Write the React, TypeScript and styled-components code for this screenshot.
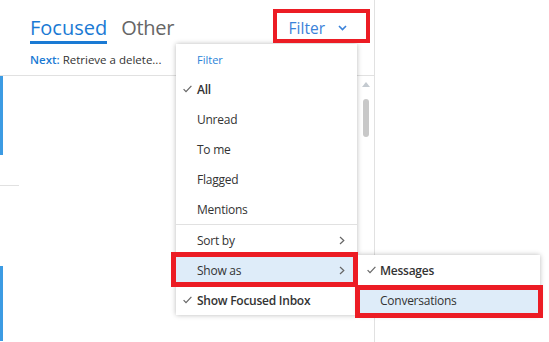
import React from 'react'
import styled, { createGlobalStyle } from 'styled-components'

//Global
const GlobalStyle = createGlobalStyle`
  html, body {
    margin: 0;
    padding: 0;
    background: #ffffff;
  }
  body {
    font-family: 'Open Sans', 'Noto Sans', sans-serif;
    color: #333333;
  }
`

//Styled Components
const Page = styled.div`
  position: relative;
  width: 549px;
  height: 342px;
  overflow: hidden;
  display: flex;
`

const MailPane = styled.div`
  width: 374px;
  height: 342px;
  border-right: 1px solid #e1e1e1;
  display: flex;
  flex-direction: column;
`

const Header = styled.div`
  height: 76px;
  box-sizing: border-box;
  padding-left: 30px;
  border-bottom: 1px solid #e1e1e1;
`

const TabsRow = styled.div`
  height: 44px;
  display: flex;
  align-items: flex-end;
`

const Tab = styled.div<{ $active?: boolean }>`
  font-size: 20px;
  line-height: 24px;
  padding-bottom: 1px;
  margin-right: 14px;
  letter-spacing: ${(p) => (p.$active ? '0' : '-0.3px')};
  color: ${(p) => (p.$active ? '#1a7ad4' : '#666666')};
  border-bottom: 3px solid ${(p) => (p.$active ? '#1a7ad4' : 'transparent')};
`

const FilterButton = styled.div`
  margin-left: auto;
  margin-right: 27px;
  align-self: flex-start;
  margin-top: 17px;
  display: flex;
  align-items: center;
  gap: 13px;
  font-size: 15.5px;
  line-height: 22px;
  color: #3b82d9;
`

const NextLine = styled.div`
  margin-top: 8px;
  font-size: 11.5px;
  line-height: 16px;
  color: #333333;
  b {
    color: #1a7ad4;
    font-weight: 600;
  }
`

const ListArea = styled.div`
  flex: 1;
  display: flex;
`

const MessageList = styled.div`
  flex: 1;
  display: flex;
  flex-direction: column;
`

const MessageRow = styled.div<{ $height: number; $offset: number }>`
  height: ${(p) => p.$height}px;
  padding-top: ${(p) => p.$offset}px;
  box-sizing: border-box;
  display: flex;
`

const UnreadMark = styled.div<{ $size: number }>`
  width: 3px;
  height: ${(p) => p.$size}px;
  background: #3c9be3;
`

const RowDivider = styled.div`
  width: 19px;
  height: 1px;
  background: #e1e1e1;
`

const ScrollBar = styled.div`
  width: 16px;
  display: flex;
  flex-direction: column;
  align-items: center;
  padding-top: 6px;
  gap: 12px;
`

const ScrollArrow = styled.div`
  width: 0;
  height: 0;
  border-left: 4px solid transparent;
  border-right: 4px solid transparent;
  border-bottom: 5px solid #c4cad0;
`

const ScrollThumb = styled.div`
  width: 6px;
  height: 38px;
  border-radius: 3px;
  background: #c8c8c8;
`

const Menu = styled.div`
  position: absolute;
  left: 176px;
  top: 44px;
  width: 181px;
  background: #ffffff;
  box-shadow: 0 0 5px rgba(0, 0, 0, 0.28);
  display: flex;
  flex-direction: column;
`

const MenuHeader = styled.div`
  height: 30px;
  padding-left: 21px;
  display: flex;
  align-items: center;
  font-size: 11px;
  color: #2b84d8;
`

const MenuItem = styled.div<{ $selected?: boolean; $bold?: boolean; $inset?: number }>`
  position: relative;
  height: 30px;
  display: flex;
  align-items: center;
  padding-left: ${(p) => p.$inset ?? 7}px;
  padding-right: 12px;
  font-size: 12px;
  letter-spacing: -0.25px;
  font-weight: ${(p) => (p.$bold ? 600 : 400)};
  color: #333333;
  background: ${(p) => (p.$selected ? '#deecf9' : 'transparent')};
`

const CheckSlot = styled.span<{ $width: number }>`
  width: ${(p) => p.$width}px;
  display: flex;
  align-items: center;
`

const ItemLabel = styled.span`
  flex: 1;
`

const Separator = styled.div`
  height: 1px;
  background: #e1e1e1;
`

const SubMenu = styled.div`
  position: absolute;
  left: 182px;
  top: 0;
  width: 182px;
  background: #ffffff;
  box-shadow: 0 0 5px rgba(0, 0, 0, 0.28);
  display: flex;
  flex-direction: column;
`

const Annotation = styled.div<{ $x: number; $y: number; $w: number; $h: number; $t: number }>`
  position: absolute;
  left: ${(p) => p.$x}px;
  top: ${(p) => p.$y}px;
  width: ${(p) => p.$w}px;
  height: ${(p) => p.$h}px;
  box-sizing: border-box;
  border: ${(p) => p.$t}px solid #ec1c24;
  pointer-events: none;
`

//Icons
const Check: React.FC = () => (
  <svg width="9" height="8" viewBox="0 0 9 8">
    <polyline points="0.6,4.2 3,6.6 8.4,0.8" fill="none" stroke="#666" strokeWidth="1.2" />
  </svg>
)

const ChevronRight: React.FC = () => (
  <svg width="6" height="9" viewBox="0 0 6 9">
    <polyline points="1,1 4.8,4.5 1,8" fill="none" stroke="#666" strokeWidth="1.2" />
  </svg>
)

const ChevronDown: React.FC = () => (
  <svg width="9" height="6" viewBox="0 0 9 6">
    <polyline points="1,1 4.5,4.6 8,1" fill="none" stroke="#3b82d9" strokeWidth="1.6" />
  </svg>
)

interface IOption {
  label: string
  checked?: boolean
  bold?: boolean
}

const filterOptions: IOption[] = [
  { label: 'All', checked: true, bold: true },
  { label: 'Unread' },
  { label: 'To me' },
  { label: 'Flagged' },
  { label: 'Mentions' },
]

//React Component
const App: React.FC = () => {
  return (
    <Page>
      <GlobalStyle />
      <MailPane>
        <Header>
          <TabsRow>
            <Tab $active>Focused</Tab>
            <Tab>Other</Tab>
            <FilterButton>
              Filter
              <ChevronDown />
            </FilterButton>
          </TabsRow>
          <NextLine>
            <b>Next:</b> Retrieve a delete...
          </NextLine>
        </Header>
        <ListArea>
          <MessageList>
            <MessageRow $height={109} $offset={0}>
              <UnreadMark $size={79} />
            </MessageRow>
            <RowDivider />
            <MessageRow $height={155} $offset={80}>
              <UnreadMark $size={75} />
            </MessageRow>
          </MessageList>
          <ScrollBar>
            <ScrollArrow />
            <ScrollThumb />
          </ScrollBar>
        </ListArea>
      </MailPane>

      <Menu>
        <MenuHeader>Filter</MenuHeader>
        {filterOptions.map((o) => (
          <MenuItem key={o.label} $bold={o.bold}>
            <CheckSlot $width={14}>{o.checked && <Check />}</CheckSlot>
            <ItemLabel>{o.label}</ItemLabel>
          </MenuItem>
        ))}
        <Separator />
        <MenuItem>
          <CheckSlot $width={14} />
          <ItemLabel>Sort by</ItemLabel>
          <ChevronRight />
        </MenuItem>
        <MenuItem $selected>
          <CheckSlot $width={14} />
          <ItemLabel>Show as</ItemLabel>
          <ChevronRight />
          <SubMenu>
            <MenuItem $bold $inset={9}>
              <CheckSlot $width={13}>
                <Check />
              </CheckSlot>
              <ItemLabel>Messages</ItemLabel>
            </MenuItem>
            <MenuItem $selected $inset={9}>
              <CheckSlot $width={13} />
              <ItemLabel>Conversations</ItemLabel>
            </MenuItem>
          </SubMenu>
        </MenuItem>
        <MenuItem $bold>
          <CheckSlot $width={14}>
            <Check />
          </CheckSlot>
          <ItemLabel>Show Focused Inbox</ItemLabel>
        </MenuItem>
      </Menu>

      <Annotation $x={273} $y={9} $w={97} $h={34} $t={4} />
      <Annotation $x={171} $y={252} $w={187} $h={35} $t={5} />
      <Annotation $x={355} $y={285} $w={188} $h={33} $t={5} />
    </Page>
  )
}
export default App
